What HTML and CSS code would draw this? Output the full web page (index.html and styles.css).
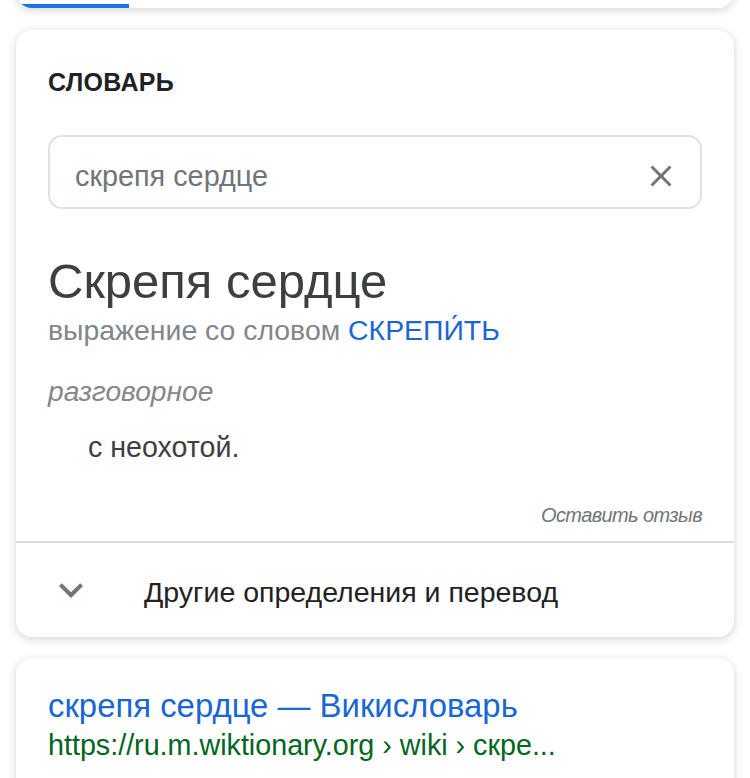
FILE: index.html
```html
<!DOCTYPE html>
<html lang="ru">
<head>
<meta charset="utf-8">
<link rel="stylesheet" href="styles.css">
</head>
<body>
<div class="card card-top">
  <div class="tab-indicator"></div>
</div>

<div class="card card-dict">
  <div class="dict-body">
    <div class="dict-label">СЛОВАРЬ</div>
    <div class="search-box">
      <span class="search-text">скрепя сердце</span>
      <svg class="close-icon" viewBox="0 0 24 24" width="36" height="36"><path d="M19 6.41L17.59 5 12 10.59 6.41 5 5 6.41 10.59 12 5 17.59 6.41 19 12 13.41 17.59 19 19 17.59 13.41 12z"/></svg>
    </div>
    <div class="headword">Скрепя сердце</div>
    <div class="subtitle">выражение со словом <span class="link">СКРЕПИ́ТЬ</span></div>
    <div class="register">разговорное</div>
    <div class="definition">с неохотой.</div>
    <div class="feedback">Оставить отзыв</div>
  </div>
  <div class="more-row">
    <svg class="chevron" viewBox="0 0 24 24" width="48" height="48"><path d="M16.59 8.59L12 13.17 7.41 8.59 6 10l6 6 6-6z"/></svg>
    <span class="more-text">Другие определения и перевод</span>
  </div>
</div>

<div class="card card-result">
  <div class="result-title">скрепя сердце — Викисловарь</div>
  <div class="result-url">https://ru.m.wiktionary.org › wiki › скре...</div>
</div>
</body>
</html>
```

FILE: styles.css
```css
html, body {
  margin: 0;
  padding: 0;
  background: #ffffff;
}

body {
  font-family: "Liberation Sans", Arial, Helvetica, sans-serif;
  overflow: hidden;
  height: 778px;
}

.card {
  background: #fff;
  margin: 0 16px;
  border-radius: 16px;
  box-shadow: 0 2px 10px rgba(32, 33, 36, 0.2);
  overflow: hidden;
}

.card-top {
  margin-top: -40px;
  height: 48px;
  display: flex;
  flex-direction: column;
  justify-content: flex-end;
}

.tab-indicator {
  width: 113px;
  height: 4px;
  background: #1a73e8;
}

.card-dict {
  margin-top: 22px;
  height: 607px;
}

.dict-body {
  padding: 36px 32px 0 32px;
}

.dict-label {
  font-size: 25px;
  font-weight: bold;
  line-height: 32px;
  letter-spacing: 0.3px;
  color: #202124;
}

.search-box {
  margin-top: 37px;
  height: 62px;
  border: 2px solid #dfe1e5;
  border-radius: 14px;
  display: flex;
  align-items: center;
  justify-content: space-between;
  padding: 8px 21px 0 25px;
}

.search-text {
  font-size: 28.8px;
  color: #70757a;
}

.close-icon {
  fill: #70757a;
}

.headword {
  margin-top: 44px;
  font-size: 49px;
  line-height: 56px;
  color: #3c4043;
}

.subtitle {
  margin-top: 3px;
  font-size: 28.4px;
  line-height: 36px;
  color: #80868b;
}

.link {
  color: #1967d2;
}

.register {
  margin-top: 25px;
  font-size: 28.2px;
  line-height: 36px;
  font-style: italic;
  color: #878787;
}

.definition {
  margin-top: 20px;
  padding-left: 40px;
  font-size: 28.6px;
  line-height: 36px;
  color: #3c4043;
}

.feedback {
  margin-top: 34px;
  font-size: 20px;
  line-height: 32px;
  letter-spacing: -0.6px;
  font-style: italic;
  text-align: right;
  color: #70757a;
}

.more-row {
  margin-top: 10px;
  border-top: 2px solid #dadce0;
  height: 94px;
  display: flex;
  align-items: center;
  padding-left: 31px;
}

.chevron {
  fill: #70757a;
  margin-right: 49px;
}

.more-text {
  font-size: 28.5px;
  line-height: 36px;
  padding-top: 3px;
  color: #222;
}

.card-result {
  margin-top: 21px;
  padding: 28px 32px 20px 32px;
  height: 200px;
}

.result-title {
  font-size: 32.9px;
  line-height: 40px;
  color: #1967d2;
}

.result-url {
  margin-top: 1px;
  font-size: 28.7px;
  line-height: 36px;
  color: #006621;
}
```
